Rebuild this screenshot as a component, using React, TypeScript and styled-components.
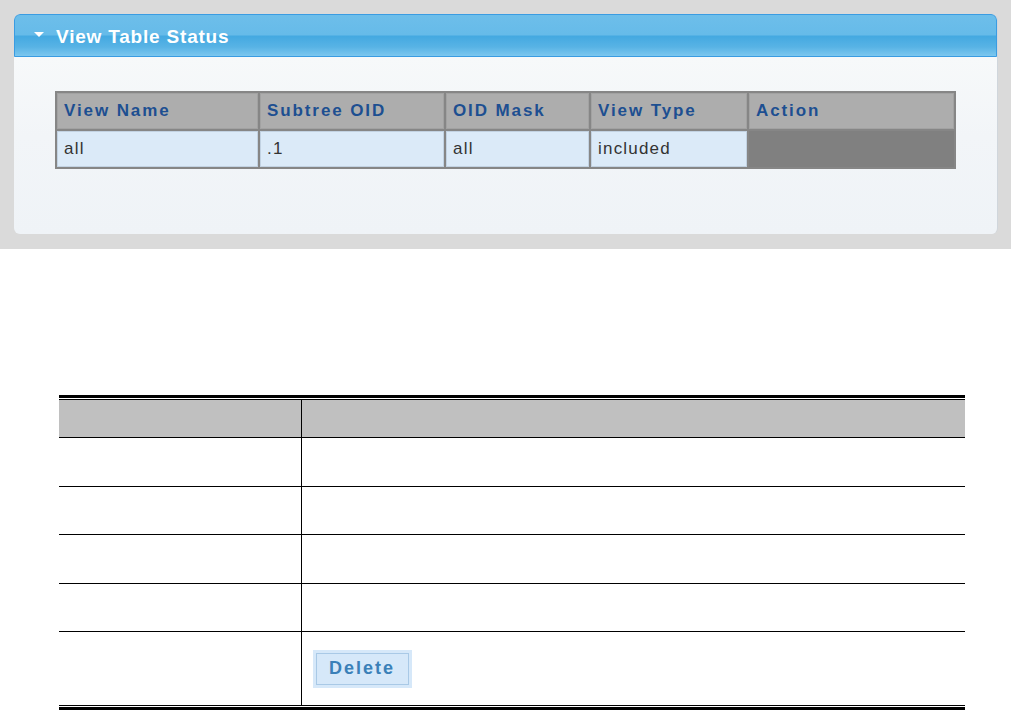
import styled, { createGlobalStyle } from "styled-components";

const GlobalStyle = createGlobalStyle`
	html, body {
		margin: 0;
		padding: 0;
		background: #ffffff;
		font-family: "Liberation Sans", Arial, sans-serif;
	}
`;

const viewColumns = [
	{ label: "View Name", width: 201 },
	{ label: "Subtree OID", width: 184 },
	{ label: "OID Mask", width: 143 },
	{ label: "View Type", width: 156 },
	{ label: "Action", width: 205 },
];

const viewRows = [{ name: "all", subtree: ".1", mask: "all", type: "included" }];

const docRows = ["", "", "", "", "delete"];

export default function App() {
	return (
		<>
			<GlobalStyle />
			<Screenshot>
				<Panel>
					<PanelHeader>
						<Caret />
						<PanelTitle>View Table Status</PanelTitle>
					</PanelHeader>
					<PanelBody>
						<ViewTable>
							<colgroup>
								{viewColumns.map((col) => (
									<col key={col.label} style={{ width: col.width }} />
								))}
							</colgroup>
							<thead>
								<tr>
									{viewColumns.map((col) => (
										<HeadCell key={col.label}>{col.label}</HeadCell>
									))}
								</tr>
							</thead>
							<tbody>
								{viewRows.map((row) => (
									<tr key={row.name}>
										<DataCell>{row.name}</DataCell>
										<DataCell>{row.subtree}</DataCell>
										<DataCell>{row.mask}</DataCell>
										<DataCell>{row.type}</DataCell>
										<ActionCell />
									</tr>
								))}
							</tbody>
						</ViewTable>
					</PanelBody>
				</Panel>
			</Screenshot>

			<DocWrapper>
				<DocTable>
					<colgroup>
						<col style={{ width: 242 }} />
						<col />
					</colgroup>
					<thead>
						<tr>
							<DocHead />
							<DocHead />
						</tr>
					</thead>
					<tbody>
						{docRows.map((kind, index) => (
							<DocRow key={index} $tall={kind === "delete"}>
								<DocCell />
								<DocCell>{kind === "delete" && <DeleteButton type="button">Delete</DeleteButton>}</DocCell>
							</DocRow>
						))}
					</tbody>
				</DocTable>
			</DocWrapper>
		</>
	);
}

const Screenshot = styled.div`
	background: #dadada;
	padding: 14px 13px 15px 14px;
	height: 249px;
	box-sizing: border-box;
`;

const Panel = styled.section`
	height: 220px;
	border-radius: 6px;
	overflow: hidden;
	display: flex;
	flex-direction: column;
	border-right: 1px solid #d0d6dc;
	box-sizing: border-box;
`;

const PanelHeader = styled.header`
	height: 43px;
	box-sizing: border-box;
	display: flex;
	align-items: center;
	gap: 12px;
	padding: 2px 0 0 19px;
	border: 1px solid #3a9ce2;
	border-radius: 6px 6px 0 0;
	background: linear-gradient(
		to bottom,
		#6dbeea 0%,
		#66bbe9 48%,
		#44a9e1 52%,
		#58b3e5 78%,
		#7cc7ef 100%
	);
`;

const Caret = styled.span`
	width: 0;
	height: 0;
	border-left: 5px solid transparent;
	border-right: 5px solid transparent;
	border-top: 5px solid #ffffff;
	margin-top: -4px;
`;

const PanelTitle = styled.h2`
	margin: 0;
	color: #ffffff;
	font-size: 19px;
	font-weight: 700;
	letter-spacing: 0.8px;
`;

const PanelBody = styled.div`
	flex: 1;
	padding: 34px 0 0 41px;
	background: linear-gradient(to bottom, #f7f9fa 0%, #f2f5f8 45%, #eff3f7 100%);
`;

const ViewTable = styled.table`
	width: 901px;
	table-layout: fixed;
	border-collapse: separate;
	border-spacing: 2px;
	background: #868686;
`;

const HeadCell = styled.th`
	height: 34px;
	padding: 0 0 0 6px;
	text-align: left;
	background: #adadad;
	border: 1px solid #a2a2a2;
	color: #1d4f91;
	font-size: 17px;
	font-weight: 700;
	letter-spacing: 1.9px;
	white-space: nowrap;
`;

const DataCell = styled.td`
	height: 34px;
	padding: 0 0 0 6px;
	background: #dbeaf8;
	border: 1px solid #c2d2e2;
	color: #333333;
	font-size: 17px;
	letter-spacing: 1.2px;
`;

const ActionCell = styled.td`
	background: #808080;
`;

const DocWrapper = styled.div`
	width: 906px;
	margin: 146px 0 0 59px;
	border-top: 3px solid #000000;
	border-bottom: 3px solid #000000;
	padding: 1px 0 1px;
`;

const DocTable = styled.table`
	width: 100%;
	table-layout: fixed;
	border-collapse: collapse;
	border-top: 1px solid #000000;
	border-bottom: 1px solid #000000;
`;

const DocHead = styled.th`
	height: 37px;
	padding: 0;
	background: #c0c0c0;
	border-bottom: 1px solid #000000;
	& + & {
		border-left: 1px solid #000000;
	}
`;

const DocRow = styled.tr<{ $tall: boolean }>`
	height: ${({ $tall }) => ($tall ? "74px" : "48.5px")};
	&:not(:first-child) td {
		border-top: 1px solid #000000;
	}
`;

const DocCell = styled.td`
	padding: 0 0 0 11px;
	vertical-align: middle;
	&:not(:first-child) {
		border-left: 1px solid #000000;
	}
`;

const DeleteButton = styled.button`
	width: 99px;
	height: 38px;
	padding: 0;
	background: #d6e8f9;
	border: 3px solid #d6e8f9;
	outline: 1px solid #a9c9e6;
	outline-offset: -4px;
	color: #3a80b8;
	font-family: "Liberation Sans", Arial, sans-serif;
	font-size: 18px;
	font-weight: 700;
	letter-spacing: 2px;
`;
